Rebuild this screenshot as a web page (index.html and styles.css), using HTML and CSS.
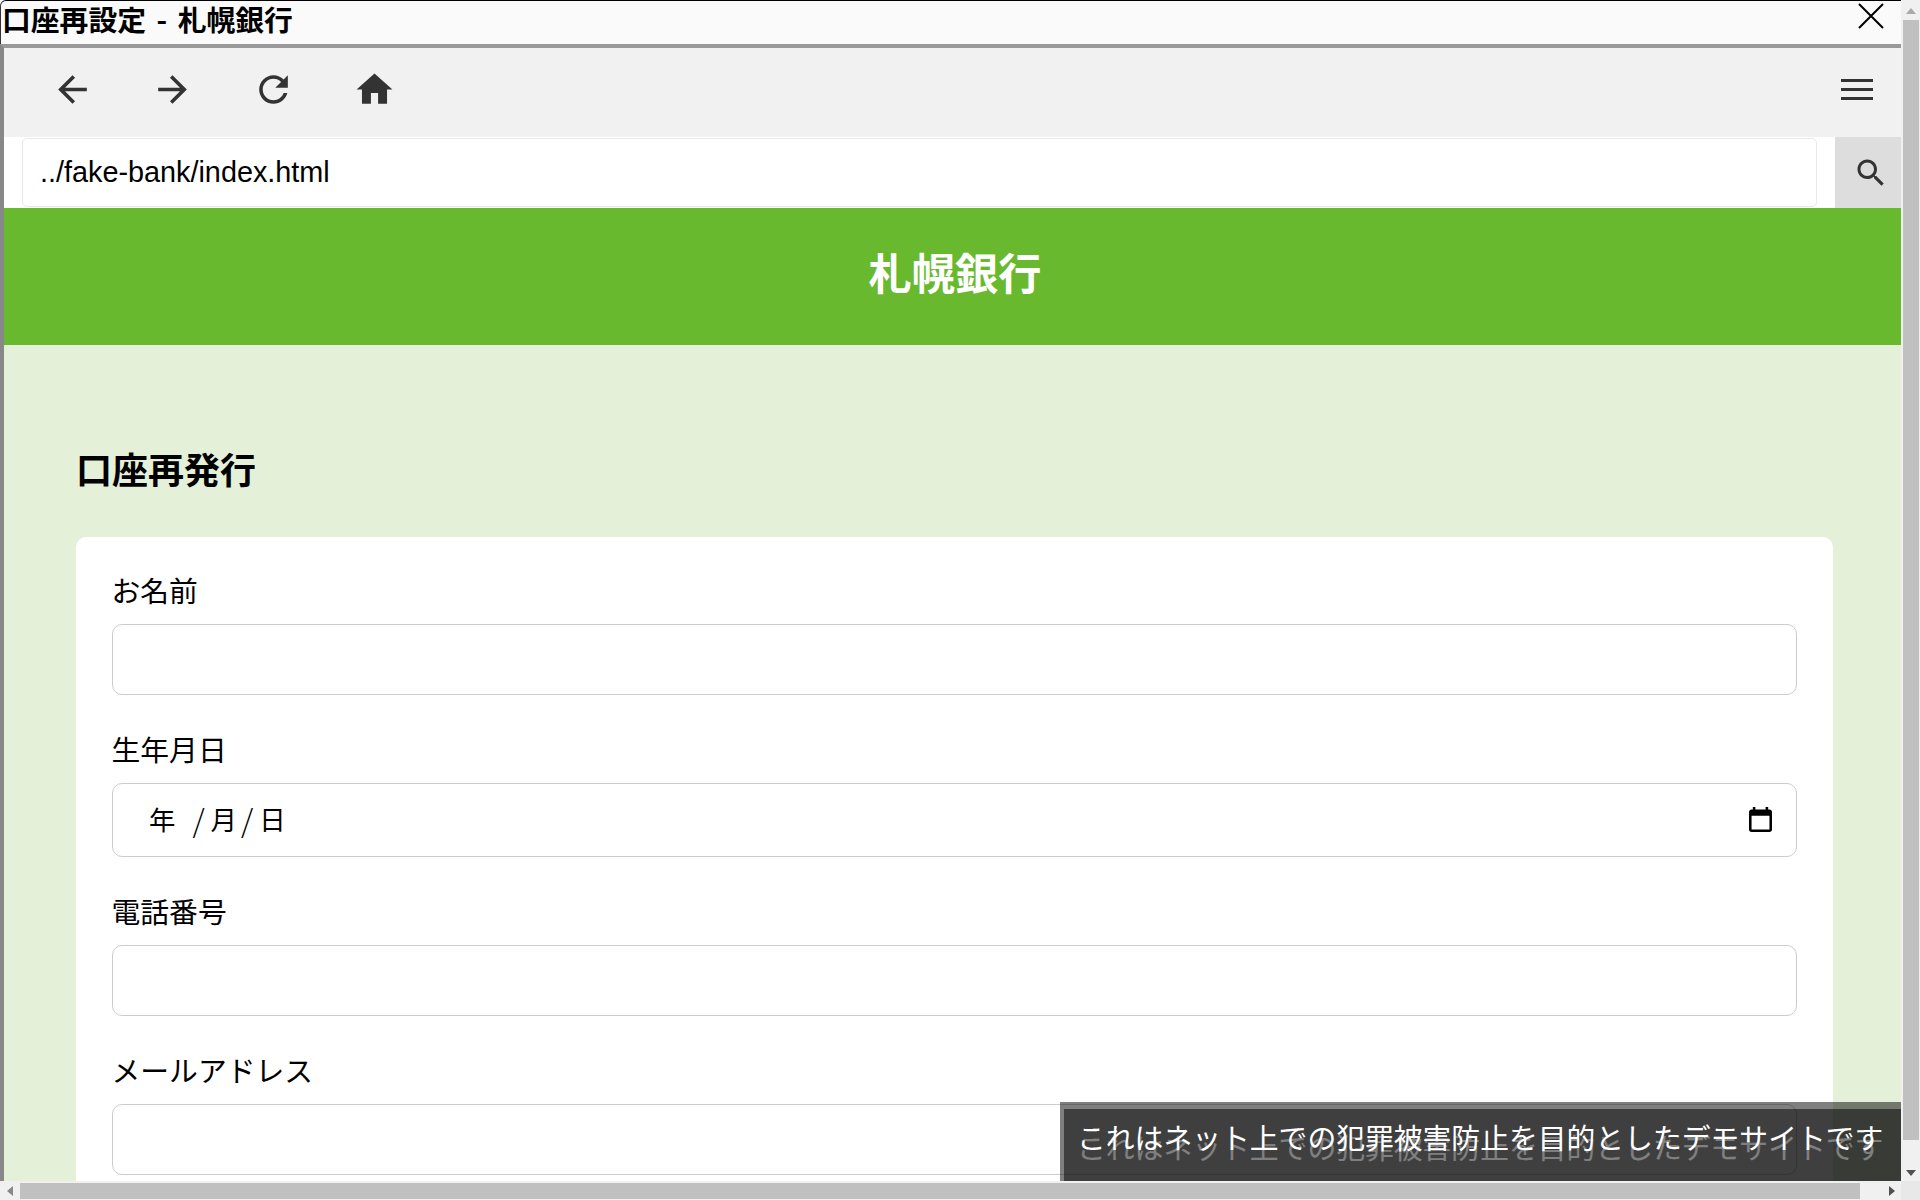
FILE: index.html
```html
<!DOCTYPE html>
<html lang="ja">
<head>
<meta charset="utf-8">
<title>口座再設定 - 札幌銀行</title>
<link rel="stylesheet" href="styles.css">
</head>
<body>
<div class="window">
  <main class="main">
    <header class="titlebar">
      <span class="title">口座再設定 - 札幌銀行</span>
      <svg class="close" viewBox="0 0 26 26"><path d="M1 1l24 24M25 1L1 25"/></svg>
    </header>
    <div class="frame">
      <nav class="toolbar">
        <div class="navs">
          <span class="nav"><svg class="icon" viewBox="0 0 24 24"><path d="M20 11H7.83l5.59-5.59L12 4l-8 8 8 8 1.41-1.41L7.83 13H20v-2z"/></svg></span>
          <span class="nav"><svg class="icon" viewBox="0 0 24 24"><path d="M4 11h12.17l-5.59-5.59L12 4l8 8-8 8-1.41-1.41L16.17 13H4v-2z"/></svg></span>
          <span class="nav"><svg class="icon" viewBox="0 0 24 24"><path d="M17.65 6.35C16.2 4.9 14.21 4 12 4c-4.42 0-7.99 3.58-7.99 8s3.57 8 7.99 8c3.73 0 6.84-2.55 7.73-6h-2.08c-.82 2.33-3.04 4-5.65 4-3.31 0-6-2.69-6-6s2.69-6 6-6c1.66 0 3.14.69 4.22 1.78L13 11h7V4l-2.35 2.35z"/></svg></span>
          <span class="nav"><svg class="icon" viewBox="0 0 24 24"><path d="M10 20v-6h4v6h5v-8h3L12 3 2 12h3v8z"/></svg></span>
        </div>
        <div class="burger"><i></i><i></i><i></i></div>
      </nav>
      <div class="address">
        <div class="url">../fake-bank/index.html</div>
        <div class="search"><svg class="search-icon" viewBox="0 0 24 24"><path d="M15.5 14h-.79l-.28-.27C15.41 12.59 16 11.11 16 9.5 16 5.91 13.09 3 9.5 3S3 5.91 3 9.5 5.91 16 9.5 16c1.61 0 3.09-.59 4.23-1.57l.27.28v.79l5 4.99L20.49 19l-4.99-5zm-6 0C7.01 14 5 11.99 5 9.5S7.01 5 9.5 5 14 7.01 14 9.5 11.99 14 9.5 14z"/></svg></div>
      </div>
      <div class="hero">札幌銀行</div>
      <section class="content">
        <h1 class="heading">口座再発行</h1>
        <form class="card">
          <label class="label">お名前</label>
          <div class="field"></div>
          <label class="label">生年月日</label>
          <div class="field field-date">
            <span class="date"><span class="d-year">年</span><span class="d-sep">/</span><span>月</span><span class="d-sep">/</span><span>日</span></span>
            <svg class="calendar" viewBox="3 1 18 20" preserveAspectRatio="none"><path d="M19 3h-1V1h-2v2H8V1H6v2H5c-1.11 0-1.99.9-1.99 2L3 19c0 1.1.89 2 2 2h14c1.1 0 2-.9 2-2V5c0-1.1-.9-2-2-2zm0 16H5V8h14v11z"/></svg>
          </div>
          <label class="label">電話番号</label>
          <div class="field"></div>
          <label class="label">メールアドレス</label>
          <div class="field"></div>
        </form>
      </section>
      <div class="notice">
        <span class="notice-text">これはネット上での犯罪被害防止を目的としたデモサイトです</span>
        <div class="notice-top"><span class="notice-text">これはネット上での犯罪被害防止を目的としたデモサイトです</span></div>
      </div>
    </div>
  </main>
  <aside class="vbar">
    <span class="arrow-up"></span>
    <span class="vthumb"></span>
    <span class="arrow-down"></span>
  </aside>
  <div class="hbar">
    <span class="arrow-left"></span>
    <span class="hthumb"></span>
    <span class="arrow-right"></span>
  </div>
  <div class="corner"></div>
</div>
</body>
</html>
```
FILE: styles.css
```css
* { box-sizing: border-box; }
html, body { margin: 0; height: 100%; overflow: hidden; }
body {
  font-family: "Noto Sans CJK JP", "Liberation Sans", sans-serif;
  font-size: 28.8px;
  color: #000;
  background: #fff;
}
.window {
  display: grid;
  grid-template-columns: 1901px 19px;
  grid-template-rows: 1181px 19px;
  height: 1200px;
}
.main {
  display: flex;
  flex-direction: column;
  overflow: hidden;
  min-height: 0;
}
.titlebar {
  flex: none;
  height: 44px;
  display: flex;
  align-items: flex-start;
  justify-content: space-between;
  background: #fafafa;
  border-top: 1px solid #000;
  border-left: 1px solid #333;
  border-top-left-radius: 6px;
  padding: 0 17px 0 1px;
}
.title { font-weight: 700; line-height: 36px; white-space: nowrap; word-spacing: 4px; }
.close { width: 26px; height: 26px; margin-top: 2px; fill: none; stroke: #000; stroke-width: 2; }
.frame {
  position: relative;
  flex: 1;
  min-height: 0;
  display: flex;
  flex-direction: column;
  overflow: hidden;
  border-top: 4px solid #999;
  border-left: 4px solid #888;
}
.toolbar {
  flex: none;
  height: 89px;
  display: flex;
  align-items: center;
  justify-content: space-between;
  background: #f1f1f1;
  padding: 0 28px 6px 18px;
}
.navs { display: flex; }
.nav { width: 100.6px; display: flex; justify-content: center; }
.icon { width: 43px; height: 43px; fill: #333; display: block; }
.burger { display: flex; flex-direction: column; gap: 6px; width: 32px; }
.burger i { display: block; height: 3px; background: #333; }
.address {
  flex: none;
  height: 71px;
  display: flex;
  align-items: stretch;
  background: #fff;
}
.url {
  margin: 1px 0 1px 18px;
  width: 1795px;
  display: flex;
  align-items: center;
  padding-left: 17px;
  font-family: "Liberation Sans", sans-serif;
  border: 1.2px solid #e8e8e8;
  border-radius: 5px;
}
.search {
  margin-left: 18px;
  width: 66px;
  background: #ddd;
  display: flex;
  align-items: center;
  justify-content: center;
  padding-left: 5px;
}
.search-icon { width: 36px; height: 36px; fill: #333; display: block; }
.hero {
  flex: none;
  height: 137px;
  display: flex;
  align-items: center;
  justify-content: center;
  padding: 0 0 12px 5px;
  background: #69b92e;
  color: #fff;
  font-size: 43.2px;
  font-weight: 700;
}
.content {
  flex: 1;
  background: #e4f0d8;
  padding: 103px 68px 0 72px;
}
.heading {
  margin: 0 0 49px;
  font-size: 36px;
  font-weight: 700;
  line-height: 40px;
}
.card {
  background: #fff;
  border-radius: 10px;
  padding: 33px 36px 40px;
}
.label { display: block; height: 40px; line-height: 40px; margin-bottom: 14px; margin-left: -.5px; }
.field {
  height: 71px;
  margin-bottom: 34px;
  background: #fff;
  border: 1.2px solid #ccc;
  border-radius: 10px;
}
.field-date {
  height: 74px;
  display: flex;
  align-items: center;
  justify-content: space-between;
  padding: 0 24px 4px 36px;
}
.date { display: flex; align-items: center; font-size: 26.4px; }
.d-year { margin-right: 13px; }
.d-sep { margin: 0 6px 0 4px; font-weight: 300; font-size: 31px; }
.calendar { width: 23px; height: 25px; fill: #000; display: block; margin-top: 2px; }
.notice {
  position: absolute;
  right: 0;
  bottom: 0;
  width: 841px;
  height: 79px;
  padding: 25px 0 0 17px;
  background: rgba(0, 0, 0, .5);
  color: #fff;
}
.notice-top {
  position: absolute;
  right: 0;
  bottom: 0;
  width: 837px;
  height: 72px;
  padding: 8px 0 0 13px;
  background: rgba(0, 0, 0, .5);
}
.notice-text { display: block; line-height: 40px; white-space: nowrap; }
.vbar {
  grid-row: 1;
  grid-column: 2;
  display: flex;
  flex-direction: column;
  align-items: center;
  background: #f0f0f0;
  padding: 0 1px 0 2px;
}
.arrow-up, .arrow-down {
  flex: none;
  width: 0;
  height: 0;
  border-left: 5px solid transparent;
  border-right: 5px solid transparent;
}
.arrow-up { margin: 8px 0 6px; border-bottom: 6px solid #aaa; }
.arrow-down { margin: 30px 0 5px; border-top: 6px solid #505050; }
.vthumb { flex: 1; width: 100%; background: #c0c0c0; }
.hbar {
  grid-row: 2;
  grid-column: 1;
  display: flex;
  align-items: center;
  background: #f0f0f0;
  padding: 2px 0 1px;
}
.arrow-left, .arrow-right {
  flex: none;
  width: 0;
  height: 0;
  border-top: 5px solid transparent;
  border-bottom: 5px solid transparent;
}
.arrow-left { margin: 0 7px 0 7px; border-right: 6px solid #888; }
.hthumb { flex: none; width: 1840px; height: 100%; background: #c0c0c0; }
.arrow-right { margin-left: 29px; border-left: 6px solid #505050; }
.corner { grid-row: 2; grid-column: 2; background: #e8e8e8; }
```
